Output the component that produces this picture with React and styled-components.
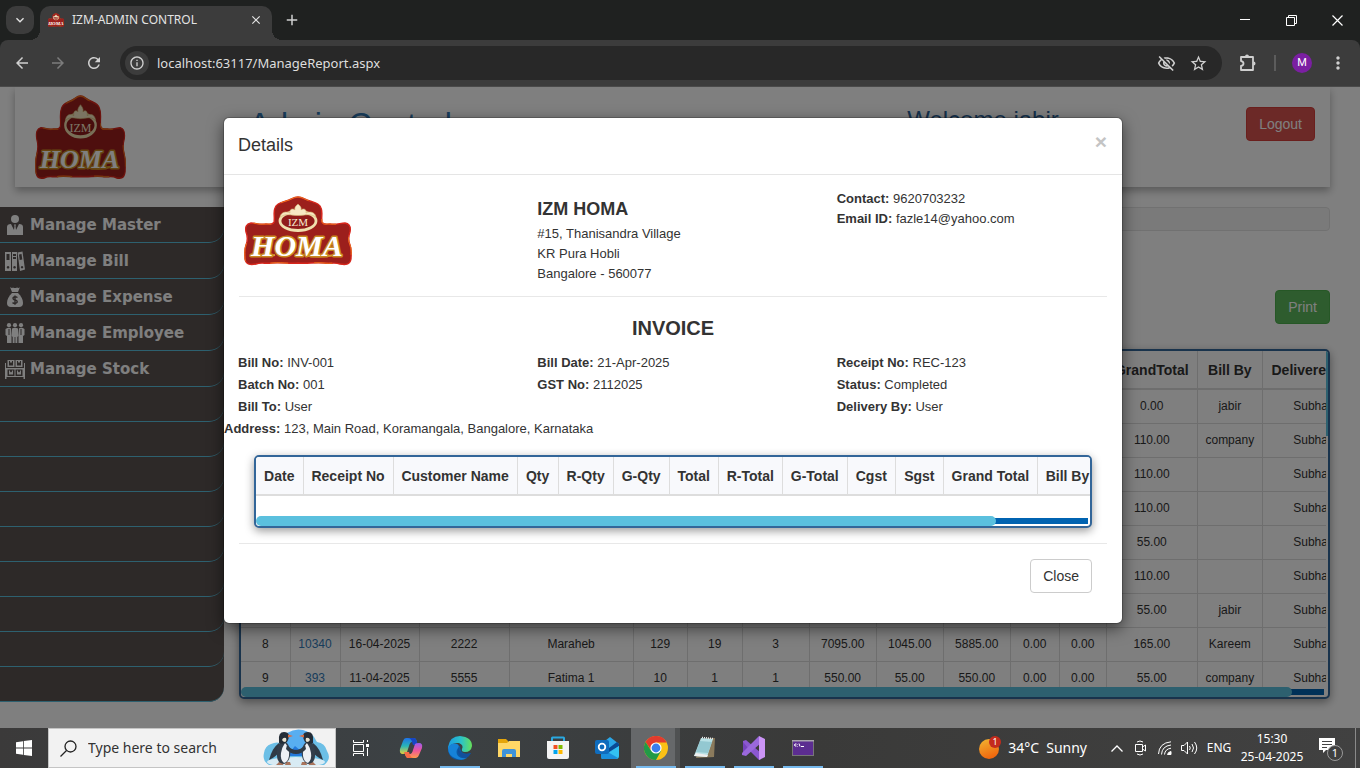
import React from "react";
import styled, { createGlobalStyle } from "styled-components";
import {
  MdArrowBack, MdArrowForward, MdRefresh, MdInfoOutline, MdOutlineVisibilityOff,
  MdStarOutline, MdMoreVert, MdClose, MdAdd, MdKeyboardArrowDown,
} from "react-icons/md";

const GlobalStyle = createGlobalStyle`
  *, *::before, *::after { box-sizing: border-box; }
  body { margin: 0; font-family: "Liberation Sans", Arial, sans-serif; font-size: 14px; line-height: 20px; color: #333; }
  button, input { font: inherit; color: inherit; padding: 0; margin: 0; border: 0; background: none; }
  h1, h2, h3, p { margin: 0; }
  svg { display: block; }
`;

const Screen = styled.div`
  display: flex;
  flex-direction: column;
  height: 100vh;
  overflow: hidden;
  background: #1f2120;
`;

/* ---------- browser chrome ---------- */
const uiFont = `"Noto Sans", "Open Sans", sans-serif`;

const TabStrip = styled.header`
  display: flex;
  align-items: flex-start;
  height: 40px;
  flex: none;
  color: #e3e3e3;
  font-family: ${uiFont};
`;
const TabSearch = styled.button`
  display: grid;
  place-items: center;
  width: 28px;
  height: 28px;
  margin: 6px;
  border-radius: 10px;
  background: #3c3c3c;
`;
const Tab = styled.div`
  position: relative;
  display: flex;
  align-items: center;
  gap: 8px;
  width: 232px;
  height: 34px;
  margin-top: 6px;
  padding: 0 9px 6px 8px;
  border-radius: 10px 10px 0 0;
  background: #3c3c3c;
  font-size: 12px;
  &::before, &::after {
    content: "";
    position: absolute;
    bottom: 0;
    width: 10px;
    height: 10px;
  }
  &::before { left: -10px; background: radial-gradient(circle at 0 0, transparent 10px, #3c3c3c 10px); }
  &::after { right: -10px; background: radial-gradient(circle at 100% 0, transparent 10px, #3c3c3c 10px); }
`;
const TabTitle = styled.span`
  flex: 1;
  white-space: nowrap;
`;
const ChromeButton = styled.button`
  display: grid;
  place-items: center;
  width: ${(p) => p.$w || 36}px;
  height: ${(p) => p.$h || 34}px;
  flex: none;
  color: ${(p) => (p.$dim ? "#7c7c7c" : "#d0d0d0")};
`;
const WindowControls = styled.div`
  display: flex;
  margin-left: auto;
  button { color: #fff; }
`;
const ToolBar = styled.nav`
  display: flex;
  align-items: center;
  height: 47px;
  flex: none;
  padding: 0 4px;
  background: #3c3c3c;
  border-bottom: 1px solid #4a4a4a;
  border-radius: 8px 8px 0 0;
  color: #d0d0d0;
`;
const Omnibox = styled.div`
  display: flex;
  align-items: center;
  flex: 1;
  height: 34px;
  margin: 0 8px;
  padding: 0 8px 0 5px;
  border-radius: 17px;
  background: #282828;
`;
const SiteInfo = styled.button`
  display: grid;
  place-items: center;
  width: 24px;
  height: 24px;
  border-radius: 50%;
  background: #3c3c3c;
`;
const Address = styled.input`
  flex: 1;
  min-width: 0;
  margin-left: 8px;
  font-family: ${uiFont};
  font-size: 13px;
  color: #dedede;
  outline: 0;
`;
const Divider = styled.span`
  width: 2px;
  height: 16px;
  margin: 0 8px;
  background: #5c5c5c;
`;
const Avatar = styled.button`
  width: 20px;
  height: 20px;
  margin: 0 8px;
  border-radius: 50%;
  background: #7b1fa2;
  color: #fff;
  font: 400 11px/20px Roboto, sans-serif;
`;

/* ---------- page ---------- */
const Page = styled.main`
  position: relative;
  flex: 1;
  min-height: 0;
  overflow: hidden;
  background: #fff;
`;
const Banner = styled.section`
  display: grid;
  grid-template-columns: 234px 1fr 339px auto;
  align-items: start;
  height: 100px;
  margin: 0 30px 20px 15px;
  padding-right: 15px;
  box-shadow: 0 4px 8px rgba(0, 0, 0, 0.3);
`;
const BannerLogo = styled.div`
  padding: 8px 0 0 20px;
`;
const PageTitle = styled.h1`
  margin-top: 20px;
  font-size: 32px;
  font-weight: 400;
  line-height: 35px;
  color: #337ab7;
`;
const Welcome = styled.h2`
  margin-top: 20px;
  font-size: 24px;
  font-weight: 400;
  line-height: 26px;
  color: #2a6299;
`;
const tones = {
  danger: ["#d9534f", "#d43f3a", "#fff"],
  success: ["#5cb85c", "#4cae4c", "#fff"],
  plain: ["#fff", "#ccc", "#333"],
};
const Button = styled.button`
  height: 34px;
  padding: 0 12px;
  border: 1px solid ${(p) => tones[p.$tone][1]};
  border-radius: 4px;
  background: ${(p) => tones[p.$tone][0]};
  color: ${(p) => tones[p.$tone][2]};
  font-size: 14px;
`;
const LogoutButton = styled(Button)`
  margin-top: 20px;
`;
const Columns = styled.div`
  display: flex;
  align-items: flex-start;
`;
const SideMenu = styled.nav`
  width: 224px;
  flex: none;
  border-radius: 0 0 15px 0;
  background: #5a5251;
`;
const MenuItem = styled.a`
  display: flex;
  align-items: center;
  gap: 5px;
  height: ${(p) => (p.$blank ? 35 : 36)}px;
  padding-left: 5px;
  border-bottom: 1px solid #5bc0de;
  border-radius: 0 0 15px 0;
  color: #fff;
  font: bold 15px/20px "DejaVu Sans", Verdana, sans-serif;
  text-decoration: none;
`;
const MenuIcon = styled.svg`
  width: 20px;
  height: 20px;
  fill: currentColor;
`;
const Content = styled.section`
  flex: 1;
  min-width: 0;
  padding: 0 30px 0 15px;
`;
const Well = styled.div`
  height: 24px;
  border: 1px solid #e3e3e3;
  border-radius: 4px;
  background: #f5f5f5;
`;
const Actions = styled.div`
  display: flex;
  justify-content: flex-end;
  padding: 59px 0 25px;
`;

/* ---------- scrolling grids ---------- */
const GridFrame = styled.div`
  border: 2px solid #369;
  border-radius: 5px;
  background: #fff;
  box-shadow: 0 3px 10px rgba(0, 0, 0, 0.4);
  overflow: hidden;
`;
const GridView = styled.div`
  display: flex;
  height: ${(p) => p.$h}px;
`;
const GridClip = styled.div`
  flex: 1;
  min-width: 0;
  overflow: hidden;
`;
const VThumb = styled.div`
  width: 2px;
  height: 85px;
  background: #5bc0de;
`;
const HBar = styled.div`
  display: flex;
  align-items: center;
  height: 10px;
  padding-right: ${(p) => p.$end}px;
`;
const HThumb = styled.div`
  position: relative;
  flex: 0 0 ${(p) => p.$size}%;
  height: 10px;
  border-radius: 5px;
  background: #5bc0de;
`;
const HTrack = styled.div`
  flex: 1;
  height: 6px;
  margin-left: -2px;
  background: #0063b1;
`;
const Table = styled.table`
  width: ${(p) => p.$w}px;
  table-layout: fixed;
  border-collapse: collapse;
  text-align: center;
  white-space: nowrap;
  th {
    height: 38px;
    padding: 0;
    border: 1px solid #ddd;
    border-top: 0;
    border-left: 0;
    border-bottom-width: 2px;
    background: ${(p) => p.$head};
    font-size: 14px;
  }
  td {
    height: 34px;
    padding: 0;
    border: 1px solid #ddd;
    border-left: 0;
    font-size: 12px;
  }
  td a { color: #337ab7; text-decoration: none; }
`;

/* ---------- dialog ---------- */
const Backdrop = styled.div`
  position: absolute;
  inset: 0;
  padding: 30px 14px 0 0;
  background: rgba(0, 0, 0, 0.5);
`;
const Dialog = styled.section`
  width: 900px;
  max-width: 100%;
  margin: 0 auto;
  padding-bottom: 30px;
  border: 1px solid rgba(0, 0, 0, 0.2);
  border-radius: 6px;
  background: #fff;
  background-clip: padding-box;
  box-shadow: 0 5px 15px rgba(0, 0, 0, 0.5);
  font-size: 13px;
`;
const DialogHead = styled.header`
  display: flex;
  justify-content: space-between;
  align-items: flex-start;
  height: 57px;
  padding: 15px 15px 0 14px;
  border-bottom: 1px solid #e5e5e5;
`;
const DialogTitle = styled.h2`
  font-size: 18px;
  font-weight: 400;
  line-height: 24px;
`;
const Dismiss = styled.button`
  font-size: 21px;
  font-weight: 700;
  line-height: 18px;
  color: #c4c4c4;
`;
const Row = styled.div`
  display: grid;
  grid-template-columns: repeat(3, 1fr);
`;
const LetterRow = styled(Row)`
  height: 121px;
  padding-top: 14px;
`;
const Cell = styled.div`
  padding: 0 14px;
  line-height: ${(p) => p.$lh}px;
`;
const Rule = styled.hr`
  height: 1px;
  margin: 0 15px;
  border: 0;
  background: #e8e8e8;
`;
const CompanyLogo = styled.div`
  padding: 7px 0 0 6px;
`;
const CompanyName = styled.h3`
  margin: 9px 0 4px;
  font-size: 18px;
  line-height: 22px;
`;
const InvoiceTitle = styled.h3`
  margin: 20px 0 13px;
  font-size: 20px;
  line-height: 22px;
  text-align: center;
`;
const AddressLine = styled.p`
  line-height: 22px;
`;
const DetailGrid = styled.div`
  margin: 15px 30px;
`;
const DialogFoot = styled.footer`
  display: flex;
  justify-content: flex-end;
  padding: 15px 30px 0;
`;

/* ---------- task bar ---------- */
const TaskBar = styled.footer`
  display: flex;
  flex: none;
  height: 40px;
  background: linear-gradient(90deg, #3b3a3a, #3c4144 30%, #3a3a39 60%, #414141);
  color: #fff;
  font-family: ${uiFont};
`;
const TaskButton = styled.button`
  position: relative;
  display: grid;
  place-items: center;
  width: ${(p) => p.$w || 49}px;
  flex: none;
  ${(p) => p.$active && "background: linear-gradient(90deg, #66686a 44px, #4f5152 44px);"}
  ${(p) => p.$open && `&::after {
    content: "";
    position: absolute;
    bottom: 0;
    left: 5px;
    right: 4px;
    height: 2px;
    background: #76b9ed;
  }`}
`;
const SearchBox = styled.label`
  display: flex;
  align-items: center;
  width: 288px;
  padding: 0 4px 0 11px;
  border: 1px solid #c4c4c4;
  background: #f2f2f2;
  color: #222;
`;
const SearchInput = styled.input`
  flex: 1;
  min-width: 0;
  margin-left: 11px;
  font-size: 14px;
  outline: 0;
  &::placeholder { color: #333; opacity: 1; }
`;
const Tray = styled.div`
  display: flex;
  align-items: center;
  margin-left: auto;
`;
const Weather = styled.button`
  display: flex;
  align-items: center;
  gap: 7px;
  margin-right: 18px;
  font-size: 14px;
`;
const TrayButton = styled.button`
  display: grid;
  place-items: center;
  width: 24px;
  height: 40px;
`;
const Language = styled.button`
  width: 36px;
  font-size: 12px;
`;
const Clock = styled.time`
  width: 70px;
  text-align: center;
  font-size: 12px;
  line-height: 18px;
`;
const Notices = styled.button`
  display: grid;
  place-items: center;
  width: 49px;
  height: 40px;
  border-right: 1px solid #8a8a8a;
  margin-right: 4px;
`;

/* ---------- drawings ---------- */
function Logo({ width, height, size = 30, small = 11 }) {
  const body =
    "M53 0C48 0 46 3 41 4C35 6 31 7 30 11C28 15 30 20 29 25C28 28 25 27 21 27C14 28 11 26 6 26C1 27 0 30 1 35C3 40 3 43 1 48C-1 53 0 58 0 62C1 68 6 68 11 67C16 65 21 67 27 66C36 65 44 67 53 66C62 67 70 65 79 66C85 67 90 65 95 67C100 68 105 68 106 62C106 58 107 53 105 48C103 43 103 40 105 35C106 30 105 27 100 26C95 26 92 28 85 27C81 27 78 28 77 25C76 20 78 15 76 11C75 7 71 6 65 4C60 3 58 0 53 0Z";
  return (
    <svg width={width} height={height} role="img" aria-label="IZM Homa">
      <svg viewBox="-1 -1 108 70" width={width} height={height} preserveAspectRatio="none">
        <path d={body} fill="#9c1f1c" stroke="#d8261c" strokeWidth="1.4" />
        <path d={body} fill="none" stroke="#e8711c" strokeWidth="1" strokeDasharray="18 26" />
        <ellipse cx="53" cy="24" rx="18" ry="9.500" fill="#8f1a1a" stroke="#f0dfae" strokeWidth="2.800" />
        <path d="M35 20C36 15 41 14 45 16C44 12 48 11 50 13C49 10 52 8 53 7C54 8 57 10 56 13C58 11 62 12 61 16C65 14 70 15 71 20C65 16 60 18.500 53 18.500C46 18.500 41 16 35 20Z" fill="#f7e8c4" stroke="#d3b673" strokeWidth=".6" />
        <path d="M12 58Q20 60 30 58M60 58.500Q78 61 96 57" fill="none" stroke="#d8a02c" strokeWidth="2" />
      </svg>
      <text x="50%" y="43%" textAnchor="middle" fontFamily="Liberation Serif, serif" fontSize={small} fill="#f7ead0">IZM</text>
      <text x="49%" y="86%" textAnchor="middle" fontFamily="Liberation Serif, serif" fontWeight="700" fontStyle="italic" fontSize={size}
        fill="#fff" stroke="#c98a22" strokeWidth={size > 12 ? 3 : 0} paintOrder="stroke" strokeLinejoin="round">HOMA</text>
    </svg>
  );
}

const menuIcons = {
  master: (
    <>
      <circle cx="10" cy="4" r="4" />
      <path d="M2 20V12Q2 9 6 9L9 15 9.500 11 9 9.500H11L10.500 11 11 15 14 9Q18 9 18 12V20Z" />
    </>
  ),
  bill: (
    <path fillRule="evenodd" d="M0 1H6V20H0ZM1.500 3V9H4.500V3ZM3 15A1.300 1.300 0 1 0 3.100 15ZM7 1H12V20H7ZM8 3V5H11V3ZM8 6V8H11V6ZM9.500 15A1.300 1.300 0 1 0 9.600 15ZM12.500 1.500L17.500 .5L20 18.500L15 20ZM14 3.500L14.700 9L17.300 8.500L16.500 3ZM17 15A1.200 1.200 0 1 0 17.100 15Z" />
  ),
  expense: (
    <>
      <path d="M5 0Q7 1.500 8 .5Q10 1.500 12 .5Q14 1.500 15 0L13 5H7Z" />
      <path d="M7 6H13C16 9 18 12 18 16Q18 20 14 20H6Q2 20 2 16C2 12 4 9 7 6Z" />
      <path d="M12.500 10.500Q10 9 8.200 10.500Q7.500 12.500 10 13Q12.800 13.500 12 15.500Q10 17.300 7.500 15.700M10 8.500V17.700" fill="none" stroke="#5a5251" strokeWidth="1.400" />
    </>
  ),
  employee: (
    <>
      <circle cx="4" cy="2.200" r="2.100" /><circle cx="10" cy="2.200" r="2.100" /><circle cx="16" cy="2.200" r="2.100" />
      <path d="M.5 6Q3.500 4 6 5.200L6.500 12V20H2V13L.5 12ZM7 5.500Q10 4 13 5.500L13.300 13 12.300 14V20H10.400V14H9.600V20H7.700V14L6.800 13ZM14 5.200Q17 4 19.500 6V12L18 13V20H13.500V12Z" />
      <path d="M4 6V12M16 6V12" stroke="#5a5251" />
    </>
  ),
  stock: (
    <path fillRule="evenodd" d="M0 4H1V9H19V4H20V20H18.500V18H1.500V20H0ZM2.500 1H9.500V8H2.500ZM4 2V6.500H8V2H7V4L6 3L5 4V2ZM10.500 1H17.500V8H10.500ZM12 2V6.500H16V2H15V4L14 3L13 4V2ZM2.500 10.500H9.500V17H2.500ZM4 11.500V15.500H8V11.500H7V13.500L6 12.500L5 13.500V11.500ZM10.500 10.500H17.500V17H10.500ZM12 11.500V15.500H16V11.500H15V13.500L14 12.500L13 13.500V11.500Z" />
  ),
};

function Penguin() {
  return (
    <>
      <path d="M16 33L13 36H20L21 33ZM23 33L22 36H28L27 33Z" fill="#a9745c" />
      <path d="M16 14Q9 19 6 31Q13 28 17 22Z" fill="#2f3a46" />
      <path d="M22 12Q29 18 27 27Q26 33 21 35Q14 34 14 27Q13 18 18 12Z" fill="#333e4b" />
      <path d="M22 14Q27 19 26 27Q25 33 21 34Q17 31 18 24Q19 18 22 14Z" fill="#eef0f4" />
      <path d="M24 16Q28 21 34 21L33 25Q27 25 23 20Z" fill="#2f3a46" />
      <path d="M16 12Q15 3 21 3Q25 3 26 6Q26 10 24 13Q20 16 16 14Z" fill="#252d37" />
      <path d="M19 11Q20 8 23 9Q24 12 22 13Q20 13 19 11Z" fill="#e9e2cf" />
      <path d="M25 5.500L30 7 25 8.500Z" fill="#e0693a" />
    </>
  );
}
function SearchArt() {
  return (
    <svg width="68" height="38" viewBox="0 0 68 38" aria-hidden="true">
      <path d="M6 36Q-1 32 1 24Q2 17 8 15Q14 12 20 15Q25 4 36 2Q48 0 54 13Q62 14 64 22Q69 30 61 36Z" fill="#6cbfe6" />
      <path d="M24 4Q32 -1 40 1Q49 3 51 13L44 27H24Z" fill="#58aef0" />
      <path d="M24 27L32 17 44 27Z" fill="#2279dc" />
      <ellipse cx="33" cy="33" rx="29" ry="5" fill="#d8ebf4" />
      <Penguin />
      <g transform="translate(66 0) scale(-1 1)"><Penguin /></g>
    </svg>
  );
}

const apps = {
  copilot: (
    <>
      <defs>
        <linearGradient id="cpA" x2="0" y2="1"><stop stopColor="#1f72e8" /><stop offset=".5" stopColor="#28b5b8" /><stop offset="1" stopColor="#e6d23c" /></linearGradient>
        <linearGradient id="cpB" x2="0" y2="1"><stop stopColor="#9a5cf0" /><stop offset=".5" stopColor="#f0569a" /><stop offset="1" stopColor="#ff9c4a" /></linearGradient>
      </defs>
      <path d="M7 2H15Q17 2 18 6H13Q11 6 10 10L8 16Q7 18 4 18Q0 18 1 13L4 5Q5 2 7 2Z" fill="url(#cpA)" />
      <path d="M15 2Q17 2 18 6L19 9H14L13 6Q12 2 9 2Z" fill="#1746c4" />
      <path d="M17 22H9Q7 22 6 18H11Q13 18 14 14L16 8Q17 7 20 7Q24 7 23 12L20 19Q19 22 17 22Z" fill="url(#cpB)" />
      <path d="M9 22Q7 22 6 18L5 16H10L11 19Q12 22 15 22Z" fill="#f66a45" />
    </>
  ),
  edge: (
    <>
      <defs><linearGradient id="edA"><stop stopColor="#1b9de2" /><stop offset=".55" stopColor="#2bc3c8" /><stop offset="1" stopColor="#66e05a" /></linearGradient></defs>
      <path d="M0 12Q0 24 12 24Q19 24 23 17Q12 20 12 10Z" fill="#0c59a4" />
      <path d="M0 11Q2 0 12 0Q24 1 24 10Q23 16 17 16Q13 16 14 13Q16 9 11 7Q3 6 0 13Z" fill="url(#edA)" />
      <path d="M0 12Q3 6 9 8Q12 9 10 12Q7 16 10 20Q13 23 19 22Q15 25 9 23Q0 20 0 12Z" fill="#1683d8" />
      <path d="M10 12Q12 18 18 18Q20 18 23 17Q21 21 17 22Q9 21 10 12Z" fill="#124f9c" />
    </>
  ),
  explorer: (
    <>
      <path d="M1 3H9L11 5H11V10H1Z" fill="#e5a50a" />
      <path d="M1 7H10L12 5H23V21H1Z" fill="#ffd766" />
      <path d="M5 21V15Q5 13 7 13H17Q19 13 19 15V21H15V18H9V21Z" fill="#3f93d8" />
    </>
  ),
  store: (
    <>
      <path d="M6 6V2Q6 1.500 6.500 1.500H17.500Q18 1.500 18 2V6" fill="none" stroke="#2aa8e0" strokeWidth="2" />
      <path d="M1 5H23V21Q23 23 21 23H3Q1 23 1 21Z" fill="#f4f4f4" />
      <path d="M7.500 9H11.500V13H7.500Z" fill="#f25022" /><path d="M12.500 9H16.500V13H12.500Z" fill="#7fba00" />
      <path d="M7.500 14H11.500V18H7.500Z" fill="#00a4ef" /><path d="M12.500 14H16.500V18H12.500Z" fill="#ffb900" />
    </>
  ),
  outlook: (
    <>
      <path d="M6 8L15 1 24 8V12L14 17Z" fill="#2ba7e8" /><path d="M14 12L22 6 24 8V10L14 16Z" fill="#0a4a94" />
      <path d="M6 22L24 10V20Q24 23 21 23H8Q6 23 6 21Z" fill="#33c2f2" /><path d="M6 12L23 22Q22 23 20 23H8Q6 23 6 21Z" fill="#1a8fdc" />
      <rect y="4" width="14" height="14" rx="2" fill="#0f6cbd" />
      <circle cx="7" cy="11" r="3.300" fill="none" stroke="#fff" strokeWidth="1.800" />
    </>
  ),
  chrome: (
    <>
      <circle cx="12" cy="12" r="12" fill="#fbc116" />
      <path d="M12 6.500H22.700A12 12 0 0 0 1.600 6L7 14Z" fill="#e33b2e" />
      <path d="M1.600 6A12 12 0 0 0 12 24L17 15 12 12 7 14.500Z" fill="#229a47" />
      <circle cx="12" cy="12" r="5.600" fill="#fff" /><circle cx="12" cy="12" r="4.400" fill="#3b7ded" />
    </>
  ),
  notepad: (
    <>
      <path d="M8 3L22 2 21 21 3 22Z" fill="#8a7a5c" />
      <path d="M8 2L20 3 14 21 1 20Z" fill="#b9e1e6" />
      <path d="M7 5L19 6 15 17 3 16Z" fill="#79b7c3" opacity=".6" />
      <path d="M1 20L14 21 15 19 3 17Z" fill="#eee" /><path d="M9 1.500L20 2.500" stroke="#eee" strokeWidth="1.500" strokeDasharray="1 1" />
    </>
  ),
  studio: (
    <>
      <path d="M1 5L4 4 19 17V23L17 24 1 8Z" fill="#8b57d0" /><path d="M1 6L6 12 1 18Z" fill="#7643bd" />
      <path d="M0 17L17 0 19 7 4 20 0 19Z" fill="#9a68dc" /><path d="M17 0L23 3V21L17 24Z" fill="#cb94f5" />
    </>
  ),
  terminal: (
    <>
      <rect x="1.500" y="4.500" width="21" height="15" fill="#5c2d91" stroke="#777" />
      <path d="M1 4H23V5.500H1Z" fill="#a9a4ae" />
      <path d="M5.500 8Q3.500 7.500 3.500 9Q3.500 10.500 5.500 10M6.500 8V8.500M6.500 10V10.500M8 7.500L9 10.500M10 10.500H13" fill="none" stroke="#fff" />
    </>
  ),
};
const taskApps = [
  ["copilot", "Copilot"], ["edge", "Edge", true], ["explorer", "File Explorer"], ["store", "Store"],
  ["outlook", "Outlook"], ["chrome", "Chrome", true, true], ["notepad", "Notepad", true],
  ["studio", "Visual Studio", true], ["terminal", "Terminal", true],
];

/* ---------- data ---------- */
const menu = [
  ["master", "Manage Master"], ["bill", "Manage Bill"], ["expense", "Manage Expense"],
  ["employee", "Manage Employee"], ["stock", "Manage Stock"],
];
const blankRows = 9;

const reportCols = [
  ["#", 50], ["Bill", 50], ["Date", 79], ["Receipt No", 90], ["Customer", 124], ["Qty", 54], ["RQty", 55], ["GQty", 67],
  ["Total", 67], ["RTotal", 67], ["GTotal", 67], ["Cgst", 49], ["Sgst", 47], ["GrandTotal", 91], ["Bill By", 65], ["Delivered By", 103],
];
const blank = Array(11).fill("");
const reportRows = [
  ["1", "", ...blank, "0.00", "jabir", "Subhan"],
  ["2", "", ...blank, "110.00", "company", "Subhan"],
  ["3", "", ...blank, "110.00", "", "Subhan"],
  ["4", "", ...blank, "110.00", "", "Subhan"],
  ["5", "", ...blank, "55.00", "", "Subhan"],
  ["6", "", ...blank, "110.00", "", "Subhan"],
  ["7", "", ...blank, "55.00", "jabir", "Subhan"],
  ["8", "10340", "16-04-2025", "2222", "Maraheb", "129", "19", "3", "7095.00", "1045.00", "5885.00", "0.00", "0.00", "165.00", "Kareem", "Subhan"],
  ["9", "393", "11-04-2025", "5555", "Fatima 1", "10", "1", "1", "550.00", "55.00", "550.00", "0.00", "0.00", "55.00", "company", "Subhan"],
];
const detailCols = [
  ["Date", 48], ["Receipt No", 90], ["Customer Name", 124], ["Qty", 41], ["R-Qty", 55], ["G-Qty", 56], ["Total", 49],
  ["R-Total", 64], ["G-Total", 65], ["Cgst", 48], ["Sgst", 48], ["Grand Total", 94], ["Bill By", 60],
];
const invoice = [
  [["Bill No:", "INV-001"], ["Batch No:", "001"], ["Bill To:", "User"]],
  [["Bill Date:", "21-Apr-2025"], ["GST No:", "2112025"]],
  [["Receipt No:", "REC-123"], ["Status:", "Completed"], ["Delivery By:", "User"]],
];

function DataTable({ cols, rows = [], head }) {
  return (
    <Table $w={cols.reduce((sum, c) => sum + c[1], 0)} $head={head}>
      <colgroup>{cols.map(([name, w], i) => <col key={name} width={i ? w : w - 1} />)}</colgroup>
      <thead><tr>{cols.map(([name]) => <th key={name} scope="col">{name}</th>)}</tr></thead>
      <tbody>
        {rows.map((row) => (
          <tr key={row[0]}>
            {row.map((v, i) => <td key={i}>{i === 1 && v ? <a href="#bill">{v}</a> : v}</td>)}
          </tr>
        ))}
      </tbody>
    </Table>
  );
}

function Browser() {
  return (
    <>
      <TabStrip>
        <TabSearch aria-label="Search tabs"><MdKeyboardArrowDown size={16} /></TabSearch>
        <Tab>
          <Logo width={16} height={14} size={5} small={3} />
          <TabTitle>IZM-ADMIN CONTROL</TabTitle>
          <MdClose size={14} />
        </Tab>
        <ChromeButton $w={40} $h={40} aria-label="New tab"><MdAdd size={18} /></ChromeButton>
        <WindowControls>
          <ChromeButton $w={46} $h={40} aria-label="Minimize"><svg width="10" height="10" stroke="currentColor"><path d="M0 4.500H10" /></svg></ChromeButton>
          <ChromeButton $w={46} $h={40} aria-label="Restore"><svg width="11" height="11" fill="none" stroke="currentColor"><path d="M.5 2.500H8.500V10.500H.5ZM2.500 2.500V.5H10.500V8.500H8.500" /></svg></ChromeButton>
          <ChromeButton $w={46} $h={40} aria-label="Close window"><svg width="11" height="11" stroke="currentColor" strokeWidth="1.200"><path d="M.5 .5L10.500 10.500M10.500 .5L.5 10.500" /></svg></ChromeButton>
        </WindowControls>
      </TabStrip>
      <ToolBar>
        <ChromeButton aria-label="Back"><MdArrowBack size={18} /></ChromeButton>
        <ChromeButton $dim aria-label="Forward"><MdArrowForward size={18} /></ChromeButton>
        <ChromeButton aria-label="Reload"><MdRefresh size={18} /></ChromeButton>
        <Omnibox>
          <SiteInfo aria-label="Site information"><MdInfoOutline size={16} /></SiteInfo>
          <Address aria-label="Address" readOnly value="localhost:63117/ManageReport.aspx" />
          <ChromeButton $w={32} aria-label="Tracking"><MdOutlineVisibilityOff size={19} /></ChromeButton>
          <ChromeButton $w={32} aria-label="Bookmark"><MdStarOutline size={19} /></ChromeButton>
        </Omnibox>
        <ChromeButton aria-label="Extensions">
          <svg width="18" height="18" fill="none" stroke="currentColor" strokeWidth="1.800" strokeLinejoin="round">
            <path d="M2 3H14V16H2V12Q4.500 11.500 4.500 9.500Q4.500 7.500 2 7Z" />
            <path d="M6 2.500A2 2 0 0 1 10 2.500ZM14.500 7.500A2 2 0 0 1 14.500 11.500Z" fill="currentColor" stroke="none" />
          </svg>
        </ChromeButton>
        <Divider />
        <Avatar aria-label="Profile">M</Avatar>
        <ChromeButton aria-label="Menu"><MdMoreVert size={20} /></ChromeButton>
      </ToolBar>
    </>
  );
}

function InvoiceDialog() {
  return (
    <Backdrop>
      <Dialog role="dialog" aria-labelledby="dialog-title">
        <DialogHead>
          <DialogTitle id="dialog-title">Details</DialogTitle>
          <Dismiss aria-label="Dismiss">×</Dismiss>
        </DialogHead>
        <LetterRow>
          <Cell $lh={20}><CompanyLogo><Logo width={108} height={70} /></CompanyLogo></Cell>
          <Cell $lh={20}>
            <CompanyName>IZM HOMA</CompanyName>
            <p>#15, Thanisandra Village</p>
            <p>KR Pura Hobli</p>
            <p>Bangalore - 560077</p>
          </Cell>
          <Cell $lh={20}>
            <p><b>Contact:</b> 9620703232</p>
            <p><b>Email ID:</b> fazle14@yahoo.com</p>
          </Cell>
        </LetterRow>
        <Rule />
        <InvoiceTitle>INVOICE</InvoiceTitle>
        <Row>
          {invoice.map((col) => (
            <Cell key={col[0][0]} $lh={22}>
              {col.map(([k, v]) => <p key={k}><b>{k}</b> {v}</p>)}
            </Cell>
          ))}
        </Row>
        <AddressLine><b>Address:</b> 123, Main Road, Koramangala, Bangalore, Karnataka</AddressLine>
        <DetailGrid>
          <GridFrame>
            <GridView $h={59}><GridClip><DataTable cols={detailCols} head="#f8f9fc" /></GridClip></GridView>
            <HBar $end={2}><HThumb $size={89} /><HTrack /></HBar>
          </GridFrame>
        </DetailGrid>
        <Rule />
        <DialogFoot><Button $tone="plain">Close</Button></DialogFoot>
      </Dialog>
    </Backdrop>
  );
}

function WindowsBar() {
  return (
    <TaskBar>
      <TaskButton $w={48} aria-label="Start">
        <svg width="16" height="16" fill="#fff"><path d="M0 2.300L7 1.200V7.600H0ZM7.800 1.100L16 0V7.600H7.800ZM0 8.400H7V14.800L0 13.700ZM7.800 8.400H16V16L7.800 14.900Z" /></svg>
      </TaskButton>
      <SearchBox>
        <svg width="17" height="17" fill="none" stroke="#222" strokeWidth="1.300"><circle cx="10.500" cy="6.500" r="5.500" /><path d="M6.500 10.500L.5 16.500" /></svg>
        <SearchInput aria-label="Search" placeholder="Type here to search" />
        <SearchArt />
      </SearchBox>
      <TaskButton $w={50} aria-label="Task view">
        <svg width="18" height="16" fill="none" stroke="#fff"><path d="M1.500 0V2.500H11.500V0M1.500 16V13.500H11.500V16M1.500 4.500H11.500V11.500H1.500ZM15.500 0V2M15.500 8V16" /><path d="M14 4H17V7H14Z" fill="#fff" stroke="none" /></svg>
      </TaskButton>
      {taskApps.map(([id, label, open, active]) => (
        <TaskButton key={id} aria-label={label} $open={open} $active={active}>
          <svg width="24" height="24" viewBox="0 0 24 24">{apps[id]}</svg>
        </TaskButton>
      ))}
      <Tray>
        <Weather>
          <svg width="22" height="24">
            <defs><linearGradient id="sun" x2="0.4" y2="1"><stop stopColor="#f2b632" /><stop offset="1" stopColor="#f0680e" /></linearGradient></defs>
            <circle cx="10" cy="13" r="10" fill="url(#sun)" /><circle cx="16" cy="6" r="6" fill="#c42b1c" />
            <text x="16" y="9" textAnchor="middle" fontSize="9" fill="#fff">1</text>
          </svg>
          <span>34°C</span><span>Sunny</span>
        </Weather>
        <TrayButton aria-label="Hidden icons"><svg width="12" height="7" fill="none" stroke="#fff" strokeWidth="1.300"><path d="M.5 6.500L6 1 11.500 6.500" /></svg></TrayButton>
        <TrayButton aria-label="Meet now"><svg width="14" height="16" fill="none" stroke="#fff"><path d="M1.500 4.500H8.500V11.500H1.500ZM8.500 7L11.500 5V11L8.500 9M3 2Q6 0 9 2M3 14Q6 16 9 14" /></svg></TrayButton>
        <TrayButton aria-label="Network"><svg width="14" height="14" fill="none" stroke="#fff"><path d="M.5 13Q1 2 13 .8M3.500 13.500Q4 5 13 4M6.500 13.500Q7 8 13 7.200" /><path d="M9.500 13.500Q10 11 13 10.500V13.500Z" fill="#fff" /></svg></TrayButton>
        <TrayButton aria-label="Volume"><svg width="17" height="14" fill="none" stroke="#fff"><path d="M.5 4.500H3L6.500 1V13L3 9.500H.5ZM8.500 5Q10 7 8.500 9M11 3Q14 7 11 11M13.500 1Q18 7 13.500 13" /></svg></TrayButton>
        <Language>ENG</Language>
        <Clock>15:30<br />25-04-2025</Clock>
        <Notices aria-label="Notifications">
          <svg width="26" height="26" fill="none"><path d="M1 3H17V15H8L5 18V15H1Z" fill="#fff" /><path d="M4 6.500H14M4 9.500H14M4 12.500H9" stroke="#444" />
            <circle cx="17" cy="18" r="7.500" fill="#3f3f3f" stroke="#9a9a9a" /><text x="17" y="22" textAnchor="middle" fontSize="11" fill="#fff">1</text></svg>
        </Notices>
      </Tray>
    </TaskBar>
  );
}

export default function App() {
  return (
    <Screen>
      <GlobalStyle />
      <Browser />
      <Page>
        <Banner>
          <BannerLogo><Logo width={91} height={85} size={26} small={12} /></BannerLogo>
          <PageTitle>Admin Control</PageTitle>
          <Welcome>Welcome jabir</Welcome>
          <LogoutButton $tone="danger">Logout</LogoutButton>
        </Banner>
        <Columns>
          <SideMenu>
            {menu.map(([icon, label]) => (
              <MenuItem key={label} href={`#${icon}`}>
                <MenuIcon viewBox="0 0 20 20">{menuIcons[icon]}</MenuIcon>
                {label}
              </MenuItem>
            ))}
            {Array.from({ length: blankRows }, (_, i) => <MenuItem as="div" key={i} $blank />)}
          </SideMenu>
          <Content>
            <Well />
            <Actions><Button $tone="success">Print</Button></Actions>
            <GridFrame>
              <GridView $h={336}>
                <GridClip><DataTable cols={reportCols} rows={reportRows} head="#fff" /></GridClip>
                <VThumb />
              </GridView>
              <HBar $end={4}><HThumb $size={97} /><HTrack /></HBar>
            </GridFrame>
          </Content>
        </Columns>
        <InvoiceDialog />
      </Page>
      <WindowsBar />
    </Screen>
  );
}
